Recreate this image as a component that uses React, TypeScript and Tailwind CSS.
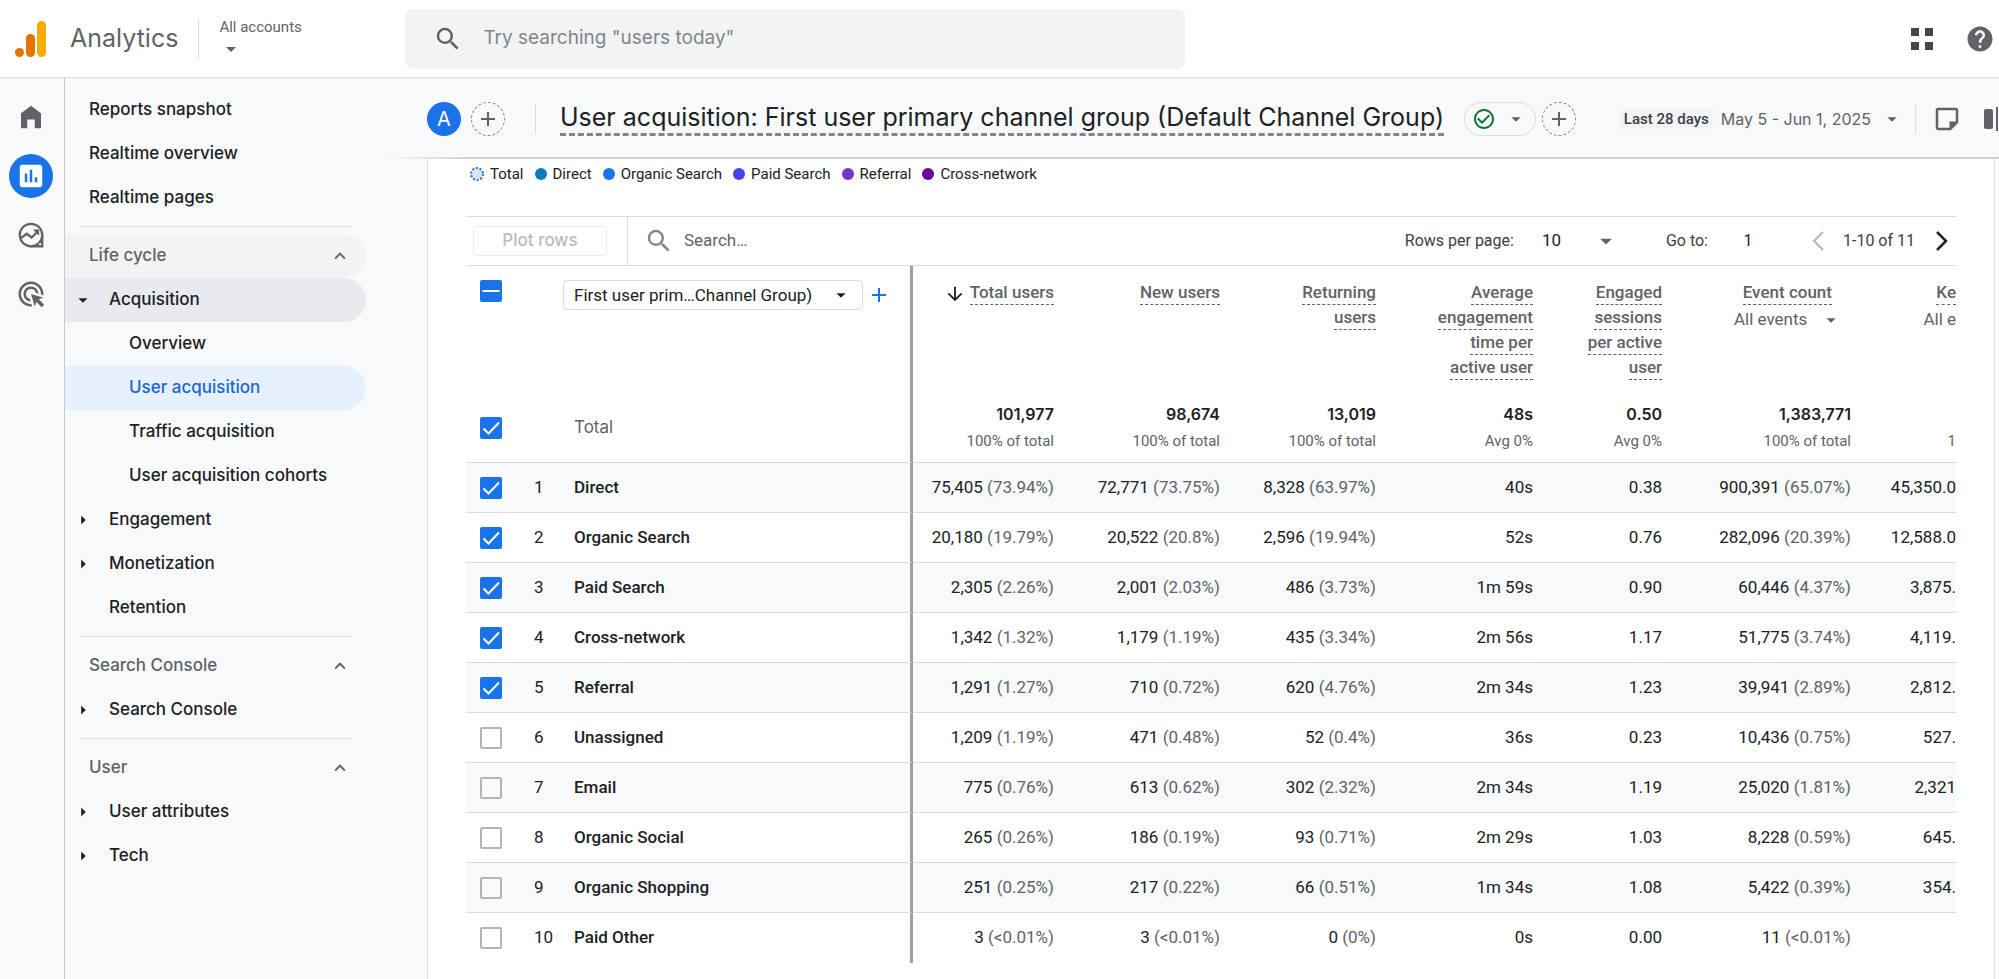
import React from "react";
import {
  MdAdd,
  MdAdsClick,
  MdArrowDownward,
  MdArrowDropDown,
  MdArrowRight,
  MdCheckCircleOutline,
  MdHelp,
  MdInsertChart,
  MdKeyboardArrowUp,
  MdSearch,
} from "react-icons/md";
import { clsx } from "clsx";

type NavItemProps = {
  label: string;
  level?: 0 | 1 | 2;
  arrow?: "right" | "down";
  active?: boolean;
  shaded?: boolean;
};

type ReportRow = {
  name: string;
  checked: boolean;
  total: [string, string];
  fresh: [string, string];
  returning: [string, string];
  time: string;
  sessions: string;
  events: [string, string];
  keyEvents: string;
};

const rows: ReportRow[] = [
  { name: "Direct", checked: true, total: ["75,405", "73.94%"], fresh: ["72,771", "73.75%"], returning: ["8,328", "63.97%"], time: "40s", sessions: "0.38", events: ["900,391", "65.07%"], keyEvents: "45,350.0" },
  { name: "Organic Search", checked: true, total: ["20,180", "19.79%"], fresh: ["20,522", "20.8%"], returning: ["2,596", "19.94%"], time: "52s", sessions: "0.76", events: ["282,096", "20.39%"], keyEvents: "12,588.0" },
  { name: "Paid Search", checked: true, total: ["2,305", "2.26%"], fresh: ["2,001", "2.03%"], returning: ["486", "3.73%"], time: "1m 59s", sessions: "0.90", events: ["60,446", "4.37%"], keyEvents: "3,875." },
  { name: "Cross-network", checked: true, total: ["1,342", "1.32%"], fresh: ["1,179", "1.19%"], returning: ["435", "3.34%"], time: "2m 56s", sessions: "1.17", events: ["51,775", "3.74%"], keyEvents: "4,119." },
  { name: "Referral", checked: true, total: ["1,291", "1.27%"], fresh: ["710", "0.72%"], returning: ["620", "4.76%"], time: "2m 34s", sessions: "1.23", events: ["39,941", "2.89%"], keyEvents: "2,812." },
  { name: "Unassigned", checked: false, total: ["1,209", "1.19%"], fresh: ["471", "0.48%"], returning: ["52", "0.4%"], time: "36s", sessions: "0.23", events: ["10,436", "0.75%"], keyEvents: "527." },
  { name: "Email", checked: false, total: ["775", "0.76%"], fresh: ["613", "0.62%"], returning: ["302", "2.32%"], time: "2m 34s", sessions: "1.19", events: ["25,020", "1.81%"], keyEvents: "2,321" },
  { name: "Organic Social", checked: false, total: ["265", "0.26%"], fresh: ["186", "0.19%"], returning: ["93", "0.71%"], time: "2m 29s", sessions: "1.03", events: ["8,228", "0.59%"], keyEvents: "645." },
  { name: "Organic Shopping", checked: false, total: ["251", "0.25%"], fresh: ["217", "0.22%"], returning: ["66", "0.51%"], time: "1m 34s", sessions: "1.08", events: ["5,422", "0.39%"], keyEvents: "354." },
  { name: "Paid Other", checked: false, total: ["3", "<0.01%"], fresh: ["3", "<0.01%"], returning: ["0", "0%"], time: "0s", sessions: "0.00", events: ["11", "<0.01%"], keyEvents: "" },
];

const totals = [
  ["101,977", "100% of total"],
  ["98,674", "100% of total"],
  ["13,019", "100% of total"],
  ["48s", "Avg 0%"],
  ["0.50", "Avg 0%"],
  ["1,383,771", "100% of total"],
];

const legend = [
  { label: "Direct", color: "bg-[#0b7ab5]" },
  { label: "Organic Search", color: "bg-[#1a73e8]" },
  { label: "Paid Search", color: "bg-[#4642ee]" },
  { label: "Referral", color: "bg-[#7632cd]" },
  { label: "Cross-network", color: "bg-[#6d0299]" },
];

function Checkbox({ label, checked, mixed }: { label: string; checked?: boolean; mixed?: boolean }) {
  const [on, setOn] = React.useState(checked || mixed || false);
  return (
    <span className="inline-grid align-middle">
      <input
        type="checkbox"
        aria-label={label}
        checked={on}
        onChange={() => setOn(!on)}
        className="col-start-1 row-start-1 size-[22px] appearance-none rounded-xs border-2 border-[#b4b4b4] checked:border-[#1a73e8] checked:bg-[#1a73e8]"
      />
      {on && (
        <svg
          viewBox="0 0 22 22"
          className="pointer-events-none col-start-1 row-start-1 size-[22px] fill-none stroke-white stroke-2"
        >
          {mixed ? <path d="M2.500 11h17" /> : <path d="M3.500 11.500l5 5L19 5.500" />}
        </svg>
      )}
    </span>
  );
}

function NavItem({ label, level = 0, arrow, active, shaded }: NavItemProps) {
  return (
    <a
      href="#"
      className={clsx(
        "flex h-11 items-center rounded-r-full text-[17px] font-medium",
        active ? "bg-[#e6f0fe] text-[#1967d2]" : "text-[#202124]",
        shaded && "bg-[#e8eaed]"
      )}
    >
      <span
        className={clsx(
          "flex shrink-0 items-center pl-[7px]",
          level === 0 && "w-6",
          level === 1 && "w-11",
          level === 2 && "w-16"
        )}
      >
        {arrow === "right" && <MdArrowRight className="size-[22px]" />}
        {arrow === "down" && <MdArrowDropDown className="size-[22px]" />}
      </span>
      {label}
    </a>
  );
}

function NavSection({ label, shaded }: { label: string; shaded?: boolean }) {
  return (
    <button
      className={clsx(
        "flex h-11 w-full items-center justify-between rounded-r-full pr-[15px] pl-6 text-[17px] font-medium text-[#5f6368]",
        shaded && "bg-[#f1f3f4]"
      )}
    >
      {label}
      <MdKeyboardArrowUp className="size-[22px]" />
    </button>
  );
}

function Divider() {
  return <hr className="mx-[15px] mt-1.5 mb-[7px] border-[#dadce0]" />;
}

function MetricHead({ children }: { children: React.ReactNode }) {
  return (
    <span className="border-b border-dashed border-[#5f6368] pb-0.5">{children}</span>
  );
}

function Metric({ value }: { value: [string, string] }) {
  return (
    <>
      {value[0]} <span className="text-[#5f6368]">({value[1]})</span>
    </>
  );
}

function DashedAdd({ label }: { label: string }) {
  return (
    <button
      aria-label={label}
      className="flex size-[34px] shrink-0 items-center justify-center rounded-full border border-dashed border-[#80868b] text-[#5f6368]"
    >
      <MdAdd className="size-6" />
    </button>
  );
}

function TopBar() {
  return (
    <header className="flex h-[78px] shrink-0 items-center border-b border-[#dadce0] bg-white font-['Inter',sans-serif]">
      <a href="#" className="flex items-center pl-[15px] text-[25px] text-[#5f6368]">
        <svg viewBox="0 0 31 36" className="mr-6 h-9 w-[31px]">
          <rect x="22" width="9" height="36" rx="4.500" fill="#f9ab00" />
          <rect x="11" y="13" width="9" height="23" rx="4.500" fill="#e37400" />
          <circle cx="4.500" cy="31.500" r="4.500" fill="#e37400" />
        </svg>
        Analytics
      </a>
      <div className="ml-5 h-10 border-l border-[#dadce0]" />
      <button className="ml-5 flex w-[90px] flex-col items-start font-['Roboto',sans-serif] text-[15px] leading-5 whitespace-nowrap text-[#5f6368]">
        All accounts
        <MdArrowDropDown className="size-6" />
      </button>
      <label className="ml-24 flex h-[60px] w-[39%] items-center rounded-lg bg-[#f1f3f4] pl-7">
        <MdSearch className="size-[30px] shrink-0 text-[#5f6368]" />
        <input
          type="text"
          aria-label="Search"
          placeholder={'Try searching "users today"'}
          className="ml-5 w-full bg-transparent text-[19px] outline-none placeholder:text-[#80868b]"
        />
      </label>
      <div className="ml-auto flex items-center gap-8 pr-1 text-[#5f6368]">
        <button aria-label="Apps">
          <svg viewBox="0 0 22 22" className="size-[22px] fill-[#444746]">
            <path d="M0 0h8v8H0zM14 0h8v8h-8zM0 14h8v8H0zM14 14h8v8h-8z" />
          </svg>
        </button>
        <button aria-label="Help">
          <MdHelp className="size-[30px]" />
        </button>
      </div>
    </header>
  );
}

function Rail() {
  return (
    <nav className="flex w-[65px] shrink-0 flex-col items-center gap-[15px] border-r border-[#c8cacd] pt-[17px] pr-[3px] text-[#5f6368]">
      <a href="#" aria-label="Home" className="flex size-11 items-center justify-center">
        <svg viewBox="0 0 24 24" className="size-[30px] fill-current">
          <path d="M4 21V9l8-6 8 6v12h-5v-7H9v7z" />
        </svg>
      </a>
      <a href="#" aria-label="Reports" className="flex size-11 items-center justify-center rounded-full bg-[#1a73e8] text-white">
        <MdInsertChart className="size-[30px]" />
      </a>
      <a href="#" aria-label="Explore" className="flex size-11 items-center justify-center">
        <svg viewBox="0 0 24 24" className="size-[30px] fill-none stroke-current">
          <circle cx="12" cy="12" r="9" strokeWidth="1.800" />
          <path d="M12 21h9v-9" strokeWidth="1.800" />
          <path d="M4 14.500l4.500-3.500 4 3 5-5" strokeWidth="1.800" />
          <path d="M13.500 7.500h5v5z" fill="currentColor" stroke="none" />
          <path d="M16.500 21l4.500-4.500V21z" fill="currentColor" stroke="none" />
          <circle cx="19.300" cy="19.300" r="0.900" fill="#f8f9fb" stroke="none" />
        </svg>
      </a>
      <a href="#" aria-label="Advertising" className="flex size-11 items-center justify-center">
        <MdAdsClick className="size-[30px]" />
      </a>
    </nav>
  );
}

function Sidebar() {
  return (
    <nav className="w-[322px] shrink-0 pt-2.5 pr-[21px] font-['Inter',sans-serif]">
      <NavItem label="Reports snapshot" />
      <NavItem label="Realtime overview" />
      <NavItem label="Realtime pages" />
      <Divider />
      <NavSection label="Life cycle" shaded />
      <NavItem label="Acquisition" level={1} arrow="down" shaded />
      <NavItem label="Overview" level={2} />
      <NavItem label="User acquisition" level={2} active />
      <NavItem label="Traffic acquisition" level={2} />
      <NavItem label="User acquisition cohorts" level={2} />
      <NavItem label="Engagement" level={1} arrow="right" />
      <NavItem label="Monetization" level={1} arrow="right" />
      <NavItem label="Retention" level={1} />
      <Divider />
      <NavSection label="Search Console" />
      <NavItem label="Search Console" level={1} arrow="right" />
      <Divider />
      <NavSection label="User" />
      <NavItem label="User attributes" level={1} arrow="right" />
      <NavItem label="Tech" level={1} arrow="right" />
    </nav>
  );
}

function TitleBar() {
  return (
    <div className="font-['Inter',sans-serif]">
      <div className="flex h-[79px] items-center pt-0.5 pl-10">
        <div className="flex size-[34px] shrink-0 items-center justify-center rounded-full bg-[#1a73e8] text-xl text-white">
          A
        </div>
        <div className="ml-2.5 flex">
          <DashedAdd label="Add comparison" />
        </div>
        <div className="ml-[30px] h-[30px] border-l border-[#dadce0]" />
        <h1 className="mb-1 ml-6 border-b-3 border-dashed border-[#80868b] pt-1 text-[25px] leading-8 whitespace-nowrap text-[#202124]">
          User acquisition: First user primary channel group (Default Channel Group)
        </h1>
        <button
          aria-label="Report status"
          className="ml-5 flex h-[34px] w-[72px] shrink-0 items-center justify-between rounded-full border border-[#dadce0] pr-2 pl-[7px]"
        >
          <MdCheckCircleOutline className="size-6 text-[#137333]" />
          <MdArrowDropDown className="size-[22px] text-[#5f6368]" />
        </button>
        <div className="ml-1.5 flex">
          <DashedAdd label="Add filter" />
        </div>
        <button className="ml-auto flex shrink-0 items-center text-base text-[#5f6368]">
          <span className="mr-2 rounded-xs bg-[#f1f3f4] px-1 font-['Roboto',sans-serif] text-[15px] leading-5 font-medium text-[#3c4043]">
            Last 28 days
          </span>
          May 5 - Jun 1, 2025
          <MdArrowDropDown className="ml-2.5 size-[22px]" />
        </button>
        <div className="ml-3 h-[30px] border-l border-[#dadce0]" />
        <button aria-label="Insights note" className="ml-4 shrink-0 text-[#5f6368]">
          <svg viewBox="0 0 24 24" className="size-[30px] fill-current">
            <path d="M19 5v9h-5v5H5V5h14m0-2H5c-1.100 0-2 .9-2 2v14c0 1.100.9 2 2 2h10l6-6V5c0-1.100-.9-2-2-2z" />
          </svg>
        </button>
        <button aria-label="Compare" className="ml-[22px] shrink-0 text-[#5f6368]">
          <svg viewBox="0 0 15 26" className="h-[26px] w-[15px] fill-current">
            <rect y="3" width="9" height="20" rx="2" />
            <rect x="12" y="1" width="2" height="24" />
          </svg>
        </button>
      </div>
      <div className="h-0.5 bg-linear-to-r from-transparent to-[#d0d3d6] to-5%" />
    </div>
  );
}

function Legend() {
  return (
    <ul className="flex items-center gap-[11px] pt-[5px] pl-1 text-[15px] leading-5 text-[#202124]">
      <li className="flex items-center gap-1.5">
        <svg viewBox="0 0 14 14" className="size-3.5">
          <circle cx="7" cy="7" r="6" fill="#dfe3e8" stroke="#1a73e8" strokeWidth="2" strokeDasharray="2 1.770" />
        </svg>
        Total
      </li>
      {legend.map((item) => (
        <li key={item.label} className="flex items-center gap-1.5">
          <span className={clsx("size-3 rounded-full", item.color)} />
          {item.label}
        </li>
      ))}
    </ul>
  );
}

function Toolbar() {
  return (
    <div className="mt-8 flex h-[50px] items-center border-y border-[#dadce0] text-base text-[#3c4043]">
      <button
        disabled
        className="ml-[7px] h-[30px] w-[134px] rounded border border-[#e8eaed] font-['Inter',sans-serif] text-[17px] font-medium text-[#b9bbbe]"
      >
        Plot rows
      </button>
      <div className="ml-5 h-full border-l border-[#dadce0]" />
      <label className="ml-4 flex items-center gap-2.5">
        <MdSearch className="size-[30px] text-[#80868b]" />
        <input
          type="text"
          aria-label="Search rows"
          placeholder="Search…"
          className="w-60 bg-transparent text-[17px] outline-none placeholder:text-[#5f6368]"
        />
      </label>
      <label htmlFor="rows-per-page" className="ml-auto">
        Rows per page:
      </label>
      <span className="ml-7 grid w-[78px] items-center">
        <select id="rows-per-page" className="col-start-1 row-start-1 appearance-none bg-transparent text-[17px] text-[#202124]">
          <option>10</option>
        </select>
        <MdArrowDropDown className="pointer-events-none col-start-1 row-start-1 size-7 justify-self-end text-[#5f6368]" />
      </span>
      <label htmlFor="go-to" className="ml-[46px]">
        Go to:
      </label>
      <input id="go-to" type="text" defaultValue="1" className="ml-6 w-8 text-center text-[#202124]" />
      <button aria-label="Previous page" className="ml-12" disabled>
        <svg viewBox="0 0 12 20" className="h-5 w-3 fill-none stroke-[#b4b7ba] stroke-2">
          <path d="M11 1L2 10l9 9" />
        </svg>
      </button>
      <span className="ml-[19px]">1-10 of 11</span>
      <button aria-label="Next page" className="mr-2 ml-[21px]">
        <svg viewBox="0 0 12 20" className="h-5 w-3 fill-none stroke-[#202124] stroke-[2.500px]">
          <path d="M1 1l9 9-9 9" />
        </svg>
      </button>
    </div>
  );
}

function ReportTable() {
  const head = "pt-3.5 pr-4 font-medium";
  return (
    <div className="overflow-hidden">
      <table className="w-full table-fixed border-separate border-spacing-0 text-right text-[17px] text-[#202124]">
        <colgroup>
          <col className="w-[50px]" />
          <col className="w-[58px]" />
          <col />
          <col className="w-[157px]" />
          <col className="w-[166px]" />
          <col className="w-[156px]" />
          <col className="w-[157px]" />
          <col className="w-[129px]" />
          <col className="w-[189px]" />
          <col className="w-[89px]" />
        </colgroup>
        <thead>
          <tr className="h-32 align-top text-[17px] leading-[25px] text-[#5f6368]">
            <th className="pt-3.5 text-center leading-none">
              <Checkbox label="Select all rows" mixed />
            </th>
            <th colSpan={2} className="border-r-[3px] border-[#9aa0a6] pt-3.5 pl-[47px] text-left font-normal">
              <div className="flex items-center">
                <span className="grid h-[30px] w-[300px] items-center rounded border border-[#dadce0]">
                  <select
                    aria-label="Primary dimension"
                    className="col-start-1 row-start-1 appearance-none bg-transparent pl-2.5 text-[#202124]"
                  >
                    <option>First user prim…Channel Group)</option>
                  </select>
                  <MdArrowDropDown className="pointer-events-none col-start-1 row-start-1 mr-2.5 size-[22px] justify-self-end text-[#202124]" />
                </span>
                <button aria-label="Add dimension" className="ml-1 text-[#1a73e8]">
                  <MdAdd className="size-6" />
                </button>
              </div>
            </th>
            <th className={head}>
              <MdArrowDownward className="mr-1 inline size-[22px] text-[#202124]" />
              <MetricHead>Total users</MetricHead>
            </th>
            <th className={head}>
              <MetricHead>New users</MetricHead>
            </th>
            <th className={head}>
              <MetricHead>
                Returning
                <br />
                users
              </MetricHead>
            </th>
            <th className={head}>
              <MetricHead>
                Average
                <br />
                engagement
                <br />
                time per
                <br />
                active user
              </MetricHead>
            </th>
            <th className={head}>
              <MetricHead>
                Engaged
                <br />
                sessions
                <br />
                per active
                <br />
                user
              </MetricHead>
            </th>
            <th className="pt-3.5 pr-[25px] font-medium">
              <div className="pr-2.5">
                <MetricHead>Event count</MetricHead>
              </div>
              <span className="mt-0.5 ml-auto grid w-[108px] items-center font-normal">
                <select aria-label="Event" className="col-start-1 row-start-1 appearance-none bg-transparent">
                  <option>All events</option>
                </select>
                <MdArrowDropDown className="pointer-events-none col-start-1 row-start-1 size-[22px] justify-self-end" />
              </span>
            </th>
            <th className="pt-3.5 font-medium">
              <MetricHead>Ke</MetricHead>
              <div className="mt-0.5 font-normal">All e</div>
            </th>
          </tr>
        </thead>
        <tbody>
          <tr className="h-[69px] *:border-b *:border-b-[#dadce0]">
            <td className="text-center leading-none">
              <Checkbox label="Select total" checked />
            </td>
            <td />
            <td className="border-r-[3px] border-r-[#9aa0a6] text-left font-['Inter',sans-serif] text-[#5f6368]">
              Total
            </td>
            {totals.map(([value, note], idx) => (
              <td key={idx} className="pr-4">
                <div className="font-['Inter',sans-serif] text-base leading-[27px] font-semibold">{value}</div>
                <div className="text-[15px] leading-[27px] text-[#5f6368]">{note}</div>
              </td>
            ))}
            <td>
              <div className="pt-[27px] text-[15px] leading-[27px] text-[#5f6368]">1</div>
            </td>
          </tr>
          {rows.map((row, idx) => (
            <tr
              key={row.name}
              className="h-[50px] odd:bg-white even:bg-[#f8f9fb] *:border-b *:border-b-[#dadce0] last:*:border-b-0"
            >
              <td className="text-center leading-none">
                <Checkbox label={"Select " + row.name} checked={row.checked} />
              </td>
              <td className="pl-[18px] text-left">{idx + 1}</td>
              <td className="border-r-[3px] border-r-[#9aa0a6] text-left font-medium">{row.name}</td>
              <td className="pr-4">
                <Metric value={row.total} />
              </td>
              <td className="pr-4">
                <Metric value={row.fresh} />
              </td>
              <td className="pr-4">
                <Metric value={row.returning} />
              </td>
              <td className="pr-4">{row.time}</td>
              <td className="pr-4">{row.sessions}</td>
              <td className="pr-4">
                <Metric value={row.events} />
              </td>
              <td>{row.keyEvents}</td>
            </tr>
          ))}
        </tbody>
      </table>
    </div>
  );
}

export default function App() {
  return (
    <div className="flex min-h-screen flex-col overflow-hidden bg-[#f8f9fb] font-['Roboto',sans-serif]">
      <TopBar />
      <div className="flex flex-1">
        <Rail />
        <Sidebar />
        <main className="flex min-w-0 flex-1 flex-col">
          <TitleBar />
          <section className="mr-1 ml-10 flex-1 border-x border-[#dadce0] bg-white px-[38px]">
            <Legend />
            <Toolbar />
            <ReportTable />
          </section>
        </main>
      </div>
    </div>
  );
}
